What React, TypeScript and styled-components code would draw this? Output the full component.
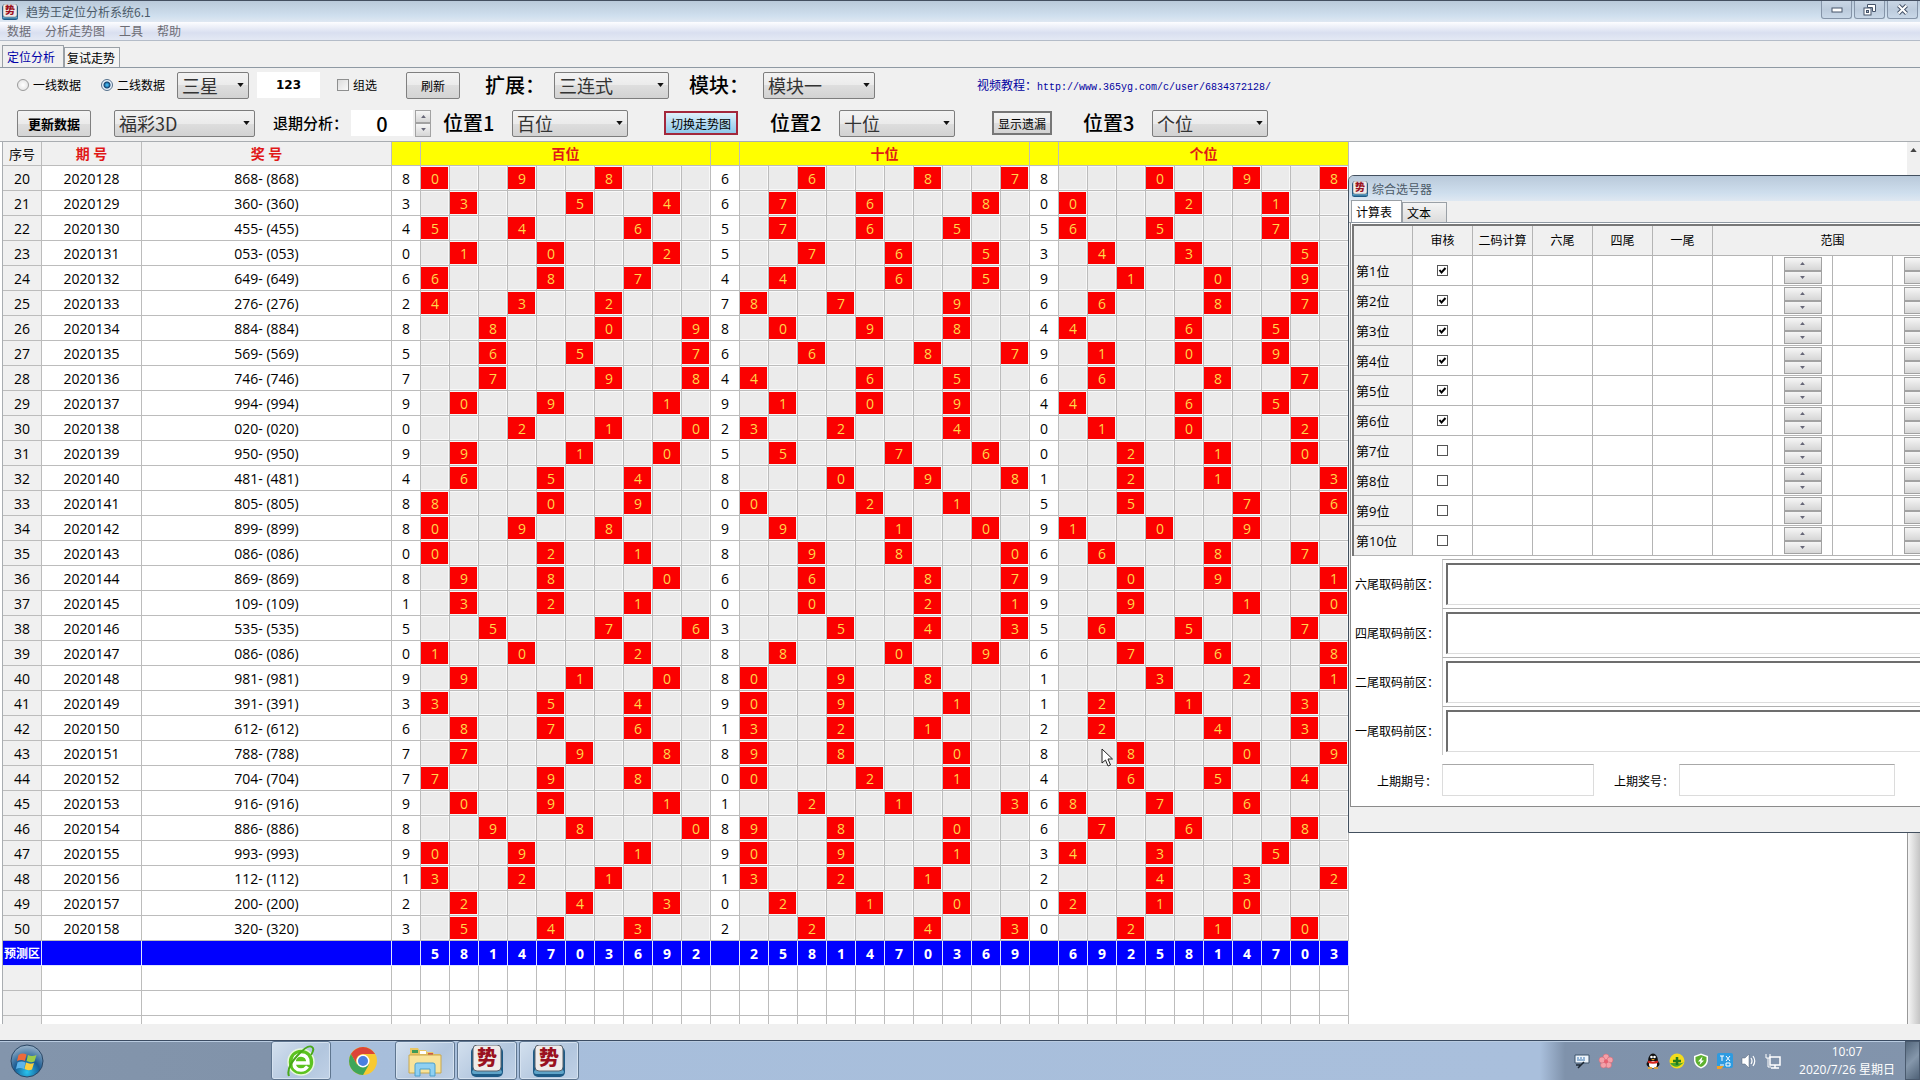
import React from 'react';
import styled, { createGlobalStyle, css } from 'styled-components';

const cjk = '"Noto Sans CJK SC", "Noto Sans", sans-serif';
const ui = '"Open Sans", "Noto Sans CJK SC", sans-serif';

const GlobalStyle = createGlobalStyle`
  * { box-sizing: border-box; }
  body { margin: 0; overflow: hidden; font-family: ${cjk}; font-size: 12px; color: #000; background: #f0f0f0; }
  button, input, select { font-family: inherit; margin: 0; color: inherit; }
`;

const Desktop = styled.div`
  height: 100vh;
  display: flex;
  flex-direction: column;
  overflow: hidden;
`;

const titleBar = css`
  display: flex;
  align-items: center;
  color: #4c5a68;
  background: linear-gradient(#b9c9da, #cfdfee 70%, #dfe8f2);
`;

const TitleBar = styled.header`
  ${titleBar}
  gap: 8px;
  height: 22px;
  padding-left: 2px;
  border-top: 1px solid #444f60;
  flex: none;
`;

const Title = styled.span`
  flex: 1;
  line-height: 20px;
`;

const WindowButtons = styled.div`
  display: flex;
  gap: 2px;
  padding-right: 2px;
  align-self: flex-start;
`;

const WindowButton = styled.button`
  width: 31px;
  height: 18px;
  padding: 0;
  display: grid;
  place-items: center;
  border: 1px solid #8594a8;
  border-top: 0;
  border-radius: 0 0 3px 3px;
  background: linear-gradient(#c9d6e5, #bccbdc 50%, #c9d8e8);
`;

const MenuBar = styled.nav`
  height: 19px;
  flex: none;
  display: flex;
  gap: 14px;
  padding-left: 7px;
  border-bottom: 1px solid #b4bcc8;
  background: linear-gradient(#fdfdff, #d9dff0 60%, #e4e9f4);
`;

const MenuItem = styled.button`
  padding: 0;
  border: 0;
  background: none;
  font-size: 12px;
  line-height: 18px;
  color: #6d6d75;
`;

const TabStrip = styled.div<{ $dialog?: boolean }>`
  display: flex;
  align-items: flex-end;
  flex: none;
  height: ${p => (p.$dialog ? 22 : 27)}px;
  padding-left: 2px;
  border-bottom: 1px solid #8f99a3;
`;

const Tab = styled.button<{ $active?: boolean; $dialog?: boolean }>`
  padding: 0 4px;
  height: ${p => (p.$active ? 22 : 20)}px;
  font-size: 12px;
  line-height: 19px;
  text-align: left;
  border: 1px solid #9aa0a6;
  border-bottom: 0;
  color: ${p => (p.$active && !p.$dialog ? '#0000a8' : '#000')};
  background: ${p => (p.$dialog ? (p.$active ? '#fff' : 'linear-gradient(#f4f4f4, #dcdcdc)') : '#f4f4f4')};
  ${p => p.$active && !p.$dialog && 'width: 62px; background: #f0f0f0;'}
  ${p => !p.$active && !p.$dialog && 'width: 56px; padding: 0 2px;'}
  ${p => p.$active && p.$dialog && 'width: 51px;'}
  ${p => p.$dialog && !p.$active && 'width: 45px;'}
`;

const Toolbar = styled.form`
  flex: none;
  display: flex;
  flex-direction: column;
  gap: 3px;
`;

const ToolRow = styled.div<{ $columns: string; $height: number }>`
  display: grid;
  align-items: center;
  height: ${p => p.$height}px;
  padding-left: 17px;
  grid-template-columns: ${p => p.$columns};
`;

const CheckLabel = styled.label`
  display: flex;
  align-items: center;
  gap: 4px;
  white-space: nowrap;
  line-height: 16px;
`;

const Radio = styled.input.attrs({ type: 'radio' })`
  appearance: none;
  width: 12px;
  height: 12px;
  border: 1px solid #9a9a9a;
  border-radius: 50%;
  background: radial-gradient(#fff, #dedede);
  &:checked {
    border-color: #55708c;
    background: radial-gradient(#3fb0e8 0 1px, #14406e 3px, #e8f2fa 4px);
  }
`;

const Check = styled.input.attrs({ type: 'checkbox' })`
  appearance: none;
  width: 12px;
  height: 12px;
  border: 1px solid #8e8f8f;
  background: linear-gradient(135deg, #dcdcdc, #fafafa);
`;

const BigLabel = styled.label`
  font-size: 20px;
  font-weight: 500;
  line-height: 26px;
  white-space: nowrap;
`;

const MidLabel = styled.label`
  font-size: 15px;
  font-weight: 500;
  line-height: 20px;
  white-space: nowrap;
`;

const SelectBox = styled.span<{ $width: number }>`
  display: grid;
  align-items: center;
  width: ${p => p.$width}px;
  & > * { grid-area: 1 / 1; }
  svg { justify-self: end; margin-right: 5px; pointer-events: none; }
`;

const SelectField = styled.select`
  appearance: none;
  width: 100%;
  height: 27px;
  padding: 0 4px;
  font-size: 18px;
  line-height: 24px;
  color: #333;
  border: 1px solid #7d7d7d;
  border-radius: 2px;
  background: linear-gradient(#f3f3f3, #ebebeb 50%, #dedede 50%, #d2d2d2);
`;

const TextField = styled.input<{ $width: number; $large?: boolean }>`
  width: ${p => p.$width}px;
  height: 26px;
  padding: 0;
  border: 0;
  background: #fff;
  text-align: center;
  font: ${p => (p.$large ? `500 20px ${cjk}` : 'bold 12px "DejaVu Sans", sans-serif')};
`;

const Push = styled.button<{ $width: number; $look?: 'hot' | 'focus' | 'bold' }>`
  width: ${p => p.$width}px;
  height: ${p => (p.$look === 'hot' || p.$look === 'focus' ? 24 : 27)}px;
  padding: 0;
  font-size: ${p => (p.$look === 'bold' ? 13 : 12)}px;
  font-weight: ${p => (p.$look === 'bold' ? 700 : 400)};
  white-space: nowrap;
  border: 1px solid #808080;
  border-radius: 2px;
  background: linear-gradient(#f3f3f3, #ebebeb 50%, #dedede 50%, #d4d4d4);
  ${p => p.$look === 'hot' && 'border: 2px solid #a3283c; border-radius: 0; background: linear-gradient(#dff1fb, #b5dcf2 50%, #90c8ea);'}
  ${p => p.$look === 'focus' && 'border: 2px solid #777; border-radius: 0;'}
`;

const SpinBox = styled.span<{ $width: number }>`
  display: inline-flex;
  flex-direction: column;
  width: ${p => p.$width}px;
  height: 27px;
  vertical-align: top;
`;

const SpinButton = styled.button`
  flex: 1;
  padding: 0;
  display: grid;
  place-items: center;
  border: 1px solid #a2a2a2;
  background: linear-gradient(#f6f6f6, #e6e6e6 50%, #d6d6d6);
`;

const Tutorial = styled.p`
  margin: 0;
  color: #0000a0;
  white-space: nowrap;
  line-height: 16px;
  a { color: inherit; text-decoration: none; font: 10px "Liberation Mono", monospace; }
`;

const Work = styled.main`
  flex: 1;
  min-height: 0;
  display: flex;
  margin-bottom: 16px;
  padding-left: 2px;
  border-top: 1px solid #a9adb1;
  background: #fff;
  overflow: hidden;
`;

const Trend = styled.table`
  flex: none;
  align-self: flex-start;
  table-layout: fixed;
  width: 1347px;
  border-collapse: separate;
  border-spacing: 0;
  border-left: 1px solid #a9adb1;
  font: 14px ${ui};
  td, th {
    height: 25px;
    padding: 1px 0 0;
    line-height: 22px;
    text-align: center;
    overflow: hidden;
    white-space: nowrap;
    border-right: 1px solid #bcbcbc;
    border-bottom: 1px solid #bcbcbc;
  }
  thead td, thead th {
    height: 24px;
    padding: 0;
  }
`;

const Head = styled.th<{ $tone?: 'plain' | 'yellow' | 'red' }>`
  font-size: ${p => (p.$tone === 'plain' ? 13 : 14)}px;
  font-weight: ${p => (p.$tone === 'plain' ? 400 : 700)};
  color: ${p => (p.$tone === 'plain' ? '#111' : '#e01818')};
  background: ${p => (p.$tone === 'yellow' ? '#ff0' : '#f0f0f0')};
`;

const RowHead = styled.th`
  font-weight: 400;
  background: #f0f0f0;
`;

const Slot = styled.td<{ $hit: boolean }>`
  color: #ffd84a;
  background: ${p => (p.$hit ? '#fb0000' : '#ebebeb')};
  box-shadow: inset -1px 0 #f8f8f8, inset 0 1px #f8f8f8, inset 0 -1px #f8f8f8;
`;

const ForecastRow = styled.tr`
  td, th {
    color: #fff;
    font-weight: 700;
    background: #00f;
    border-color: #dfe4ff;
  }
  th { font-size: 12px; }
`;

const ScrollBar = styled.div`
  width: 13px;
  margin-left: auto;
  padding-top: 6px;
  display: flex;
  flex-direction: column;
  align-items: center;
  gap: 32px;
  background: #f0f0f0;
`;

const Thumb = styled.div`
  flex: 1;
  align-self: stretch;
  border-left: 1px solid #989898;
  background: linear-gradient(90deg, #f5f5f5, #c4c4c4);
`;

const Picker = styled.section`
  position: absolute;
  left: 1348px;
  top: 175px;
  width: 640px;
  height: 658px;
  display: flex;
  flex-direction: column;
  border: 1px solid #43505f;
  border-top-left-radius: 6px;
  background: #f0f0f0;
  overflow: hidden;
`;

const PickerTitle = styled.header`
  ${titleBar}
  gap: 4px;
  height: 25px;
  padding-left: 3px;
  flex: none;
`;

const PickerPage = styled.div`
  flex: none;
  height: 584px;
  margin-left: 1px;
  padding: 1px 0 0 1px;
  border-left: 1px solid #8b8b8b;
  border-bottom: 1px solid #8b8b8b;
  background: #fff;
`;

const PickTable = styled.table`
  table-layout: fixed;
  width: 601px;
  border-collapse: separate;
  border-spacing: 0;
  border-top: 2px solid #777;
  border-left: 2px solid #777;
  font: 12px ${ui};
  td, th {
    height: 30px;
    padding: 0;
    text-align: center;
    font-weight: 400;
    line-height: 20px;
    border-right: 1px solid #b4b4b4;
    border-bottom: 1px solid #b4b4b4;
  }
  thead th, thead td { background: #f0f0f0; }
  tbody th { background: #f0f0f0; text-align: left; padding-left: 2px; font-size: 13px; }
`;

const SmallCheck = styled.input.attrs({ type: 'checkbox' })`
  appearance: none;
  width: 11px;
  height: 11px;
  display: block;
  border: 1px solid #555;
  background: #fff;
`;

const CheckCell = styled.label`
  display: grid;
  place-items: center;
  & > * { grid-area: 1 / 1; }
  svg { pointer-events: none; }
`;

const Areas = styled.div`
  display: flex;
  flex-direction: column;
  padding-top: 3px;
`;

const AreaRow = styled.div`
  display: grid;
  grid-template-columns: 87px 500px;
  align-items: center;
  height: 49px;
  padding-left: 3px;
`;

const AreaBox = styled.div`
  padding: 3px 0 3px 3px;
  border-top: 1px solid #b0b0b0;
  border-left: 1px solid #c8c8c8;
`;

const AreaInput = styled.textarea`
  display: block;
  width: 100%;
  height: 42px;
  resize: none;
  border: 0;
  border-top: 2px solid #6d6d6d;
  border-left: 2px solid #6d6d6d;
  border-bottom: 1px solid #ddd;
  background: #fff;
`;

const LastRow = styled.div`
  display: grid;
  grid-template-columns: 65px 172px 65px 216px;
  align-items: center;
  height: 32px;
  margin-top: 9px;
  padding-left: 25px;
`;

const LastInput = styled.input<{ $width: number }>`
  width: ${p => p.$width}px;
  height: 32px;
  border: 1px solid #dcdcdc;
  border-top-color: #a8a8a8;
  background: #fff;
`;

const Pointer = styled.svg`
  position: absolute;
  left: 1101px;
  top: 748px;
`;

const TaskBar = styled.footer`
  flex: none;
  height: 40px;
  display: flex;
  align-items: stretch;
  border-top: 1px solid #3b4c63;
  box-shadow: inset 0 1px #b9cbe0;
  background: linear-gradient(90deg, #8395ac 0, #8193aa 270px, #a7bedb 332px, #a9bfdc calc(100% - 380px), #7f92ab calc(100% - 355px), #8294ac);
`;

const StartButton = styled.button`
  width: 271px;
  padding: 3px 0 0 9px;
  border: 0;
  background: none;
  text-align: left;
`;

const Tasks = styled.div`
  display: flex;
  gap: 2px;
  flex: 1;
`;

const Task = styled.button<{ $open?: boolean }>`
  width: 60px;
  padding: 0;
  display: grid;
  place-items: center;
  border: 1px solid ${p => (p.$open ? '#5f7690' : 'transparent')};
  border-radius: 3px;
  background: ${p => (p.$open ? 'linear-gradient(135deg, #d3e0ee, #b2c6de 60%, #c0d1e6)' : 'none')};
  ${p => p.$open && 'box-shadow: inset 0 0 0 1px #d5e2f0;'}
`;

const Tray = styled.div`
  display: flex;
  align-items: center;
  gap: 8px;
`;

const TrayGap = styled.span`
  width: 15px;
`;

const Clock = styled.time`
  width: 116px;
  text-align: center;
  color: #fff;
  font: 12px ${ui};
  line-height: 18px;
  white-space: pre-line;
`;

const ShowDesktop = styled.button`
  width: 15px;
  padding: 0;
  border: 1px solid #4a5a6e;
  background: linear-gradient(135deg, #54677c, #8597ab 50%, #4f6277);
`;

function Arrow({ up, size = 7, color = '#111' }: { up?: boolean; size?: number; color?: string }) {
  return (
    <svg width={size} height={Math.ceil(size / 2)} viewBox="0 0 8 5" aria-hidden="true">
      <path d={up ? 'M0 5 4 0 8 5Z' : 'M0 0h8L4 5Z'} fill={color} />
    </svg>
  );
}

function AppIcon({ size }: { size: number }) {
  return (
    <svg width={size} height={size} viewBox="0 0 32 32" aria-hidden="true">
      <rect x="0" y="2" width="32" height="30" rx="5" fill="#1d5a86" />
      <rect x="1" y="25" width="30" height="4" rx="2" fill="#5ea3c8" />
      <rect x="2" y="0" width="28" height="26" rx="4" fill="#efebea" stroke="#59626c" />
      <text x="16" y="20" textAnchor="middle" fontFamily="Noto Sans CJK SC, sans-serif" fontWeight="900" fontSize="20" fill="#9a1020">势</text>
    </svg>
  );
}

function Spinner({ width, label }: { width: number; label: string }) {
  return (
    <SpinBox $width={width}>
      <SpinButton type="button" aria-label={label + ' +'}><Arrow up size={5} color="#667" /></SpinButton>
      <SpinButton type="button" aria-label={label + ' -'}><Arrow size={5} color="#667" /></SpinButton>
    </SpinBox>
  );
}

function Choice({ id, value, width, label }: { id: string; value: string; width: number; label?: string }) {
  return (
    <SelectBox $width={width}>
      <SelectField id={id} aria-label={label} defaultValue={value}><option>{value}</option></SelectField>
      <Arrow />
    </SelectBox>
  );
}

// Each group is "digit column" pairs; the three groups are hundreds, tens and units.
const draws: [string, string, string, string][] = [
  ['868', '00 93 86', '62 86 79', '03 96 89'],
  ['360', '31 55 48', '71 64 88', '00 24 17'],
  ['455', '50 43 67', '71 64 57', '60 53 77'],
  ['053', '11 04 28', '72 65 58', '41 34 58'],
  ['649', '60 84 77', '41 65 58', '12 05 98'],
  ['276', '40 33 26', '80 73 97', '61 85 78'],
  ['884', '82 06 99', '01 94 87', '40 64 57'],
  ['569', '62 55 79', '62 86 79', '11 04 97'],
  ['746', '72 96 89', '40 64 57', '61 85 78'],
  ['994', '01 94 18', '11 04 97', '40 64 57'],
  ['020', '23 16 09', '30 23 47', '11 04 28'],
  ['950', '91 15 08', '51 75 68', '22 15 08'],
  ['481', '61 54 47', '03 96 89', '22 15 39'],
  ['805', '80 04 97', '00 24 17', '52 76 69'],
  ['899', '00 93 86', '91 15 08', '10 03 96'],
  ['086', '00 24 17', '92 85 09', '61 85 78'],
  ['869', '91 84 08', '62 86 79', '02 95 19'],
  ['109', '31 24 17', '02 26 19', '92 16 09'],
  ['535', '52 76 69', '53 46 39', '61 54 78'],
  ['086', '10 03 27', '81 05 98', '72 65 89'],
  ['981', '91 15 08', '00 93 86', '33 26 19'],
  ['391', '30 54 47', '00 93 17', '21 14 38'],
  ['612', '81 74 67', '30 23 16', '21 45 38'],
  ['788', '71 95 88', '90 83 07', '82 06 99'],
  ['704', '70 94 87', '00 24 17', '62 55 48'],
  ['916', '01 94 18', '22 15 39', '80 73 66'],
  ['886', '92 85 09', '90 83 07', '71 64 88'],
  ['993', '00 93 17', '00 93 17', '40 33 57'],
  ['112', '30 23 16', '30 23 16', '43 36 29'],
  ['200', '21 45 38', '21 14 07', '20 13 06'],
  ['320', '51 44 37', '22 46 39', '22 15 08'],
];

const forecast = ['5814703692', '2581470369', '6925814703'];
const tens = Array.from({ length: 10 }, (_, i) => i);

function Group({ digit, hits }: { digit: string; hits: string }) {
  const marks = new Map(hits.split(' ').map(h => [Number(h[1]), h[0]]));
  return (
    <>
      <td>{digit}</td>
      {tens.map(i => <Slot key={i} $hit={marks.has(i)}>{marks.get(i)}</Slot>)}
    </>
  );
}

function TrendTable() {
  return (
    <Trend>
      <colgroup>
        <col style={{ width: 39 }} /><col style={{ width: 100 }} /><col style={{ width: 250 }} />
        {Array.from({ length: 33 }, (_, i) => <col key={i} />)}
      </colgroup>
      <thead>
        <tr>
          <Head $tone="plain">序号</Head>
          <Head $tone="red">期 号</Head>
          <Head $tone="red">奖 号</Head>
          {['百位', '十位', '个位'].map(n => (
            <React.Fragment key={n}>
              <Head as="td" $tone="yellow" />
              <Head $tone="yellow" colSpan={10}>{n}</Head>
            </React.Fragment>
          ))}
        </tr>
      </thead>
      <tbody>
        {draws.map(([num, ...groups], r) => (
          <tr key={r}>
            <RowHead>{r + 20}</RowHead>
            <td>{2020128 + r}</td>
            <td>{num}- ({num})</td>
            {groups.map((g, i) => <Group key={i} digit={num[i]} hits={g} />)}
          </tr>
        ))}
        <ForecastRow>
          <th>预测区</th>
          <td /><td />
          {forecast.map(f => (
            <React.Fragment key={f}>
              <td />
              {f.split('').map(d => <td key={d}>{d}</td>)}
            </React.Fragment>
          ))}
        </ForecastRow>
        {[0, 1, 2].map(r => (
          <tr key={r}>
            <RowHead />
            {Array.from({ length: 35 }, (_, i) => <td key={i} />)}
          </tr>
        ))}
      </tbody>
    </Trend>
  );
}

function PickerWindow() {
  return (
    <Picker>
      <PickerTitle><AppIcon size={16} /><Title>综合选号器</Title></PickerTitle>
      <TabStrip $dialog>
        <Tab $dialog $active>计算表</Tab>
        <Tab $dialog>文本</Tab>
      </TabStrip>
      <PickerPage>
        <PickTable>
          <colgroup>{tens.map(i => <col key={i} style={{ width: i === 0 ? 59 : 60 }} />)}</colgroup>
          <thead>
            <tr>
              <td />
              {['审核', '二码计算', '六尾', '四尾', '一尾'].map(h => <th key={h}>{h}</th>)}
              <th colSpan={4}>范围</th>
            </tr>
          </thead>
          <tbody>
            {tens.map(i => (
              <tr key={i}>
                <th>第{i + 1}位</th>
                <td>
                  <CheckCell>
                    <SmallCheck defaultChecked={i < 6} aria-label={`第${i + 1}位`} />
                    {i < 6 && (
                      <svg width="9" height="9" viewBox="0 0 9 9" aria-hidden="true">
                        <path d="M1.5 4 3.5 6.5 7.5 2" fill="none" stroke="#000" strokeWidth="2" />
                      </svg>
                    )}
                  </CheckCell>
                </td>
                <td /><td /><td /><td /><td />
                <td><Spinner width={38} label={`第${i + 1}位`} /></td>
                <td />
                <td><Spinner width={38} label={`第${i + 1}位`} /></td>
              </tr>
            ))}
          </tbody>
        </PickTable>
        <Areas>
          {['六', '四', '二', '一'].map(n => (
            <AreaRow key={n}>
              <label htmlFor={'area' + n}>{n}尾取码前区：</label>
              <AreaBox><AreaInput id={'area' + n} /></AreaBox>
            </AreaRow>
          ))}
        </Areas>
        <LastRow>
          <label htmlFor="lastIssue">上期期号：</label>
          <LastInput id="lastIssue" $width={152} />
          <label htmlFor="lastNumber">上期奖号：</label>
          <LastInput id="lastNumber" $width={216} />
        </LastRow>
      </PickerPage>
    </Picker>
  );
}

function StartOrb() {
  return (
    <svg width="36" height="34" viewBox="0 0 36 34" aria-hidden="true">
      <defs>
        <radialGradient id="orb" cx="50%" cy="85%" r="80%">
          <stop offset="0" stopColor="#27c3ee" />
          <stop offset=".5" stopColor="#1a5c94" />
          <stop offset="1" stopColor="#8fabc4" />
        </radialGradient>
      </defs>
      <circle cx="18" cy="17" r="16" fill="url(#orb)" stroke="#2b4765" />
      <path d="M9.500 11q4-2.500 8-.5l-1.500 6.500q-4-2-8 0Z" fill="#ee6a3a" />
      <path d="M19 11q4 2 8.500 0l-2 6.500q-4 1.500-8-.5Z" fill="#9acb4a" />
      <path d="M8.500 18.500q4-2 8 0L15 25q-4-2-8 0Z" fill="#5db4ea" />
      <path d="M17 18.500q4 2 8 .5l-2 6.500q-4 1.500-7.500-.5Z" fill="#fbce3d" />
    </svg>
  );
}

function GreenBrowser() {
  return (
    <svg width="32" height="34" viewBox="0 0 32 34" aria-hidden="true">
      <circle cx="16" cy="18" r="13" fill="#5cc31f" stroke="#e9f7dc" strokeWidth="1.500" />
      <path d="M9 19h14q0-8-7-8t-7 7.500 7 7.500q4 0 6.500-3.500" fill="none" stroke="#fff" strokeWidth="3.500" />
      <path d="M4 32Q1 24 12 12T27 3q3 2-1 8" fill="none" stroke="#49a91a" strokeWidth="2" />
    </svg>
  );
}

function Chrome() {
  return (
    <svg width="30" height="30" viewBox="0 0 30 30" aria-hidden="true">
      <circle cx="15" cy="15" r="14" fill="#f8c932" />
      <path d="M2.900 8A14 14 0 0 1 27.100 8H15a7 7 0 0 0-6 10.500Z" fill="#dc4437" />
      <path d="M2.900 8A14 14 0 0 0 15 29l6-10.500H9Z" fill="#3fa658" />
      <circle cx="15" cy="15" r="6.500" fill="#fff" />
      <circle cx="15" cy="15" r="5" fill="#4a7fe0" />
    </svg>
  );
}

function Folder() {
  return (
    <svg width="34" height="32" viewBox="0 0 34 32" aria-hidden="true">
      <path d="M2 3h8l1 2h7l1 2h6l1 2h6v18H2Z" fill="#e8c665" />
      <path d="M4 5h6v3H4Z" fill="#3e9b57" />
      <path d="M12 6h6v3h-6Z" fill="#fff" />
      <path d="M20 8h5v3h-5Z" fill="#cf5946" />
      <path d="M1 10h32v18H1Z" fill="#f8e39a" stroke="#c9a84f" />
      <path d="M7 31V20q0-2 2-2h16q2 0 2 2v11h-5v-7H12v7Z" fill="#8fd0f2" stroke="#4a9fcc" />
    </svg>
  );
}

function TrayIcons() {
  return (
    <>
      <svg width="16" height="16" viewBox="0 0 16 16"><path d="M1 2h14v8H1Z" fill="#edf4fb" stroke="#40566e" /><path d="M3 5h2m1 0h2m1 0h2M3 7h8" stroke="#3d77b0" /><path d="M10 9 4 15M2 12h5" fill="none" stroke="#1c2733" strokeWidth="1.500" /></svg>
      <svg width="16" height="16" viewBox="0 0 16 16"><g fill="#f4a0a8" stroke="#d06a78" strokeWidth=".6"><circle cx="8" cy="4" r="3" /><circle cx="12" cy="7" r="3" /><circle cx="10.500" cy="12" r="3" /><circle cx="5.500" cy="12" r="3" /><circle cx="4" cy="7" r="3" /></g><circle cx="8" cy="8.500" r="2" fill="#e9606f" /></svg>
      <TrayGap />
      <svg width="16" height="16" viewBox="0 0 16 16"><ellipse cx="8" cy="8" rx="5" ry="7.500" fill="#111" /><ellipse cx="8" cy="11" rx="6.500" ry="4" fill="#111" /><ellipse cx="8" cy="11.500" rx="4" ry="3.500" fill="#fff" /><circle cx="6.500" cy="4" r="1.300" fill="#fff" /><circle cx="9.500" cy="4" r="1.300" fill="#fff" /><path d="M6 6h4l-2 1.500Z" fill="#f5a51d" /><path d="M3 8.500q5 2.500 10 0" stroke="#d7261e" strokeWidth="2" fill="none" /><path d="M3 15h4m2 0h4" stroke="#f5a51d" strokeWidth="1.500" /></svg>
      <svg width="16" height="16" viewBox="0 0 16 16"><circle cx="8" cy="8" r="7.500" fill="#f3dc1c" /><path d="M1 10q6 8 14-1-3 2-6 1Z" fill="#49a52d" /><path d="M8 4v8M4 8h8" stroke="#247a1c" strokeWidth="2.500" /></svg>
      <svg width="16" height="16" viewBox="0 0 16 16"><path d="M8 .5 15 3v5q-1 5.500-7 7.500Q2 13.500 1 8V3Z" fill="#fff" /><path d="M8 2 13.500 4v4q-1 4-5.500 6-4.500-2-5.500-6V4Z" fill="#5eb12f" /><path d="M9.500 3.500 5 8.500h2.500L6.500 12 11 7.500H8.500Z" fill="#fff" /></svg>
      <svg width="16" height="16" viewBox="0 0 16 16"><rect width="16" height="15" rx="2" fill="#2e9be0" /><path d="M3 3h4M5 3v5M9 3l4 5m0-5L9 8M3 12h4m2-2h4v3H9Z" stroke="#fff" fill="none" /><path d="M0 13h7l-3 3H0Z" fill="#f1a126" /></svg>
      <svg width="16" height="16" viewBox="0 0 16 16"><path d="M1 5h3l4-4v14l-4-4H1Z" fill="#fff" stroke="#55657a" strokeWidth=".5" /><path d="M10 5q2 3 0 6m2-8q3.500 5 0 10" fill="none" stroke="#fff" strokeWidth="1.200" /></svg>
      <svg width="16" height="16" viewBox="0 0 16 16"><path d="M5 4h10v8H5Zm5 8v3m-4 0h8" fill="none" stroke="#fff" strokeWidth="1.500" /><path d="M1 1v4h4V1M3 5v9h3" fill="none" stroke="#fff" /></svg>
    </>
  );
}

export default function App() {
  return (
    <Desktop>
      <GlobalStyle />
      <TitleBar>
        <AppIcon size={16} />
        <Title>趋势王定位分析系统6.1</Title>
        <WindowButtons>
          <WindowButton aria-label="最小化"><svg width="12" height="6"><rect x="1" y="1" width="10" height="4" fill="#fff" stroke="#46546a" /></svg></WindowButton>
          <WindowButton aria-label="还原"><svg width="13" height="12"><path d="M4.500.5h8v7h-3v-4h-5Z" fill="#fff" stroke="#46546a" /><rect x="1" y="4" width="7" height="7" fill="#fff" stroke="#46546a" /><rect x="3.500" y="6.500" width="2" height="2" fill="#aab9cc" stroke="#46546a" /></svg></WindowButton>
          <WindowButton aria-label="关闭"><svg width="13" height="11" viewBox="0 0 13 11"><path d="m2.500 1.500 8 8m0-8-8 8" stroke="#46546a" strokeWidth="4" /><path d="m2.500 1.500 8 8m0-8-8 8" stroke="#fff" strokeWidth="2" /></svg></WindowButton>
        </WindowButtons>
      </TitleBar>
      <MenuBar>
        {['数据', '分析走势图', '工具', '帮助'].map(m => <MenuItem key={m}>{m}</MenuItem>)}
      </MenuBar>
      <TabStrip>
        <Tab $active>定位分析</Tab>
        <Tab>复试走势</Tab>
      </TabStrip>
      <Toolbar onSubmit={e => e.preventDefault()}>
        <ToolRow $height={34} $columns="84px 76px 80px 80px 69px 79px 69px 135px 74px 214px auto">
          <CheckLabel><Radio name="line" />一线数据</CheckLabel>
          <CheckLabel><Radio name="line" defaultChecked />二线数据</CheckLabel>
          <Choice id="star" label="星" value="三星" width={72} />
          <TextField $width={63} defaultValue="123" aria-label="号码" />
          <CheckLabel><Check />组选</CheckLabel>
          <Push $width={54}>刷新</Push>
          <BigLabel htmlFor="expand">扩展：</BigLabel>
          <Choice id="expand" value="三连式" width={115} />
          <BigLabel htmlFor="module">模块：</BigLabel>
          <Choice id="module" value="模块一" width={112} />
          <Tutorial>视频教程：<a href="http://www.365yg.com/c/user/6834372128/">http://www.365yg.com/c/user/6834372128/</a></Tutorial>
        </ToolRow>
        <ToolRow $height={36} $columns="97px 159px 78px 64px 28px 69px 152px 106px 69px 153px 91px 69px auto">
          <Push $width={74} $look="bold">更新数据</Push>
          <Choice id="lottery" label="彩种" value="福彩3D" width={141} />
          <MidLabel htmlFor="back">退期分析：</MidLabel>
          <TextField id="back" $width={62} $large defaultValue="0" />
          <Spinner width={16} label="退期" />
          <BigLabel htmlFor="pos1">位置1</BigLabel>
          <Choice id="pos1" value="百位" width={116} />
          <Push $width={74} $look="hot">切换走势图</Push>
          <BigLabel htmlFor="pos2">位置2</BigLabel>
          <Choice id="pos2" value="十位" width={116} />
          <Push $width={60} $look="focus">显示遗漏</Push>
          <BigLabel htmlFor="pos3">位置3</BigLabel>
          <Choice id="pos3" value="个位" width={116} />
        </ToolRow>
      </Toolbar>
      <Work>
        <TrendTable />
        <ScrollBar><Arrow up size={7} color="#444" /><Thumb /></ScrollBar>
      </Work>
      <TaskBar>
        <StartButton aria-label="开始"><StartOrb /></StartButton>
        <Tasks>
          <Task $open aria-label="浏览器"><GreenBrowser /></Task>
          <Task aria-label="Chrome"><Chrome /></Task>
          <Task $open aria-label="文件"><Folder /></Task>
          <Task $open aria-label="趋势王"><AppIcon size={32} /></Task>
          <Task $open aria-label="选号器"><AppIcon size={32} /></Task>
        </Tasks>
        <Tray>
          <TrayIcons />
          <Clock>{'10:07\n2020/7/26 星期日'}</Clock>
        </Tray>
        <ShowDesktop aria-label="显示桌面" />
      </TaskBar>
      <PickerWindow />
      <Pointer width="13" height="20" viewBox="0 0 13 20" aria-hidden="true">
        <path d="M1 1v14l3.500-3 2.500 6 2.500-1-2.500-6h4.500Z" fill="#fff" stroke="#222" />
      </Pointer>
    </Desktop>
  );
}
